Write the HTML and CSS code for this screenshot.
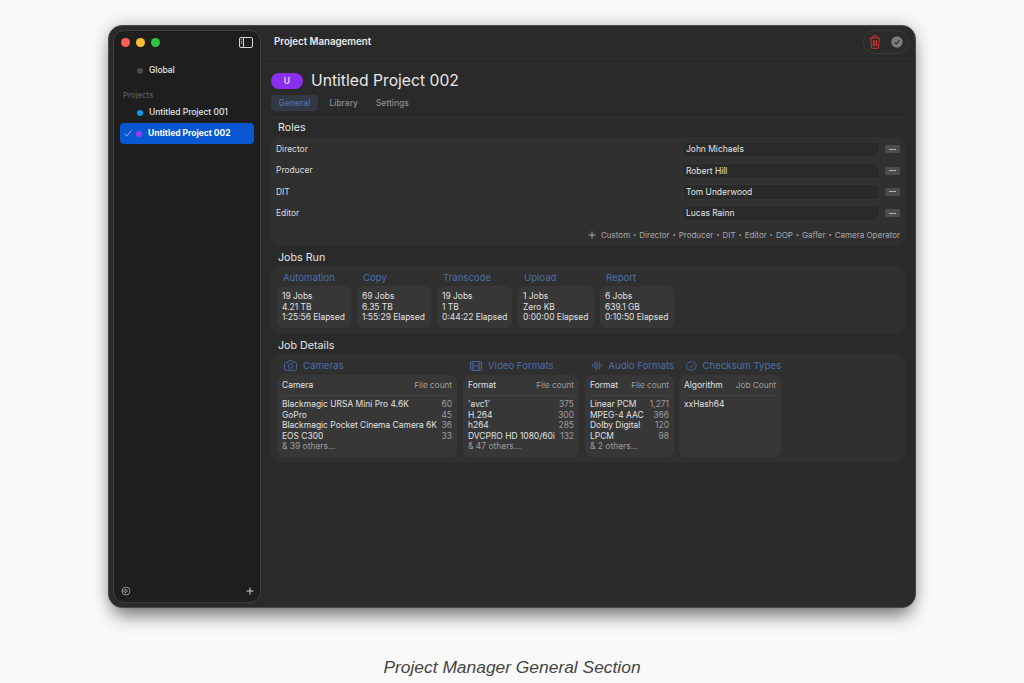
FILE: index.html
```html
<!DOCTYPE html>
<html lang="en">
<head>
<meta charset="utf-8">
<title>Project Manager General Section</title>
<link rel="stylesheet" href="styles.css">
</head>
<body>
<div class="window">
  <aside class="sidebar">
    <div class="side-top">
      <div class="lights"><i class="light red"></i><i class="light yellow"></i><i class="light green"></i></div>
      <svg class="toggle" width="14" height="11" viewBox="0 0 14 11" fill="none" stroke="#d4d4d4" stroke-width="1"><rect x=".5" y=".5" width="13" height="10" rx="1.5"/><path d="M4.5 .5v10"/><path d="M1.8 2.8h1.4M1.8 4.6h1.4M1.8 6.4h1.4" stroke-width=".8"/></svg>
    </div>
    <div class="side-item global"><i class="dot gray"></i>Global</div>
    <div class="side-label">Projects</div>
    <div class="side-item"><i class="dot blue"></i>Untitled Project 001</div>
    <div class="side-item selected">
      <svg class="tick" width="8" height="7" viewBox="0 0 8 7" fill="none" stroke="#b9cdf0" stroke-width=".8"><path d="M.7 3.8l2 2.4L7.3.6"/></svg>
      <i class="dot purple"></i>Untitled Project 002
    </div>
    <div class="side-foot">
      <svg width="10" height="10" viewBox="0 0 10 10" fill="none" stroke="#9a9a9a" stroke-width=".9"><circle cx="5" cy="5" r="4"/><path d="M1 5h2.2M4 3l2.6 2L4 7z"/></svg>
      <svg width="8" height="8" viewBox="0 0 8 8" fill="none" stroke="#d0d0d0" stroke-width="1"><path d="M4 .5v7M.5 4h7"/></svg>
    </div>
  </aside>
  <main class="main">
    <header class="topbar">
      <span class="topbar-title">Project Management</span>
      <div class="actions">
        <svg width="12" height="14" viewBox="0 0 12 14" fill="none" stroke="#c9302f" stroke-width="1.1"><path d="M.6 3h10.8M4 3V1.400c0-.4.3-.7.7-.7h2.600c.4 0 .7.300.7.700V3M1.800 3l.6 9.300c0 .6.500 1 1 1h5.200c.5 0 1-.4 1-1L10.200 3M4.400 5v6.200M6 5v6.200M7.600 5v6.200"/></svg>
        <svg width="12" height="12" viewBox="0 0 12 12"><circle cx="6" cy="6" r="5.700" fill="#7b7b7b"/><path d="M3.500 6.200l1.800 1.800 3.200-3.900" fill="none" stroke="#2a2a2a" stroke-width="1.100"/></svg>
      </div>
    </header>
    <div class="content">
      <div class="title-row"><span class="badge">U</span><h1>Untitled Project 002</h1></div>
      <nav class="tabs"><span class="tab active">General</span><span class="tab">Library</span><span class="tab">Settings</span></nav>

      <h2 class="section">Roles</h2>
      <section class="card roles">
        <div class="role"><span class="role-name">Director</span><span class="field">John Michaels</span><span class="minus"></span></div>
        <div class="role"><span class="role-name">Producer</span><span class="field">Robert Hill</span><span class="minus"></span></div>
        <div class="role"><span class="role-name">DIT</span><span class="field">Tom Underwood</span><span class="minus"></span></div>
        <div class="role"><span class="role-name">Editor</span><span class="field">Lucas Rainn</span><span class="minus"></span></div>
        <div class="presets">
          <svg width="8" height="8" viewBox="0 0 8 8" fill="none" stroke="#b5b5b5" stroke-width=".9"><path d="M4 .5v7M.5 4h7"/></svg>
          <span>Custom</span><b>•</b><span>Director</span><b>•</b><span>Producer</span><b>•</b><span>DIT</span><b>•</b><span>Editor</span><b>•</b><span>DOP</span><b>•</b><span>Gaffer</span><b>•</b><span>Camera Operator</span>
        </div>
      </section>

      <h2 class="section jobs-title">Jobs Run</h2>
      <section class="card jobs">
        <div class="job j74"><h3>Automation</h3><div class="box">19 Jobs<br>4.21 TB<br>1:25:56 Elapsed</div></div>
        <div class="job j74"><h3>Copy</h3><div class="box">69 Jobs<br>6.35 TB<br>1:55:29 Elapsed</div></div>
        <div class="job j75"><h3>Transcode</h3><div class="box">19 Jobs<br>1 TB<br>0:44:22 Elapsed</div></div>
        <div class="job j76"><h3>Upload</h3><div class="box">1 Jobs<br>Zero KB<br>0:00:00 Elapsed</div></div>
        <div class="job j74"><h3>Report</h3><div class="box">6 Jobs<br>639.1 GB<br>0:10:50 Elapsed</div></div>
      </section>

      <h2 class="section details-title">Job Details</h2>
      <section class="card details">
        <div class="detail w-cam">
          <h3><svg width="13" height="11" viewBox="0 0 13 11" fill="none" stroke="#4a6aa3" stroke-width=".9"><path d="M1.500 2.500h2.300l.9-1.800h3.600l.9 1.800h2.300c.5 0 1 .4 1 1v5.800c0 .5-.5 1-1 1h-10c-.5 0-1-.5-1-1V3.500c0-.6.5-1 1-1z"/><circle cx="6.500" cy="6" r="2.300"/></svg>Cameras</h3>
          <div class="box table">
            <div class="thead"><span>Camera</span><em>File count</em></div>
            <div class="tr"><span>Blackmagic URSA Mini Pro 4.6K</span><em>60</em></div>
            <div class="tr"><span>GoPro</span><em>45</em></div>
            <div class="tr"><span>Blackmagic Pocket Cinema Camera 6K</span><em>36</em></div>
            <div class="tr"><span>EOS C300</span><em>33</em></div>
            <div class="more">&amp; 39 others...</div>
          </div>
        </div>
        <div class="detail w-vid">
          <h3><svg width="12" height="10" viewBox="0 0 12 10" fill="none" stroke="#4a6aa3" stroke-width=".9"><rect x=".5" y=".5" width="11" height="9" rx="1"/><path d="M3 .5v9M9 .5v9M3 5h6M.5 3h2.500M.5 7h2.500M9 3h2.500M9 7h2.500"/></svg>Video Formats</h3>
          <div class="box table">
            <div class="thead"><span>Format</span><em>File count</em></div>
            <div class="tr"><span>'avc1'</span><em>375</em></div>
            <div class="tr"><span>H.264</span><em>300</em></div>
            <div class="tr"><span>h264</span><em>285</em></div>
            <div class="tr"><span>DVCPRO HD 1080/60i</span><em>132</em></div>
            <div class="more">&amp; 47 others...</div>
          </div>
        </div>
        <div class="detail w-aud">
          <h3><svg width="11" height="11" viewBox="0 0 11 11" fill="none" stroke="#4a6aa3" stroke-width=".9" stroke-linecap="round"><path d="M.6 4.500v2M2.400 3v5M4.200 .8v9.400M6 2.500v6M7.800 1.500v8M9.800 4.500v2"/></svg>Audio Formats</h3>
          <div class="box table">
            <div class="thead"><span>Format</span><em>File count</em></div>
            <div class="tr"><span>Linear PCM</span><em>1,271</em></div>
            <div class="tr"><span>MPEG-4 AAC</span><em>366</em></div>
            <div class="tr"><span>Dolby Digital</span><em>120</em></div>
            <div class="tr"><span>LPCM</span><em>98</em></div>
            <div class="more">&amp; 2 others...</div>
          </div>
        </div>
        <div class="detail w-sum">
          <h3><svg width="12" height="12" viewBox="0 0 12 12" fill="none" stroke="#4a6aa3" stroke-width=".9"><path d="M6 .7l1.500 1 1.800-.1.800 1.600 1.500 1-.4 1.800.4 1.800-1.500 1-.8 1.600-1.800-.1-1.500 1-1.500-1-1.800.1-.8-1.600-1.500-1L.9 6 .5 4.200l1.500-1 .8-1.600 1.800.1z"/><path d="M3.800 6.200l1.500 1.500 2.900-3.300"/></svg>Checksum Types</h3>
          <div class="box table">
            <div class="thead"><span>Algorithm</span><em>Job Count</em></div>
            <div class="tr"><span>xxHash64</span></div>
          </div>
        </div>
      </section>
    </div>
  </main>
</div>
<p class="caption">Project Manager General Section</p>
</body>
</html>
```
FILE: styles.css
```css
* { box-sizing: border-box; }
html, body { margin: 0; height: 100%; }
body {
  background: #f9f9f9;
  font-family: Inter, "Noto Sans", sans-serif;
  font-size: 8.45px;
  line-height: 10.5px;
  color: #e2e2e2;
  padding-top: 25px;
  overflow: hidden;
}
.window {
  width: 808px;
  height: 583px;
  margin-left: 108px;
  display: flex;
  background: #2a2a2a;
  border-radius: 14px;
  border: 1px solid #4a4a4a;
  box-shadow: 0 14px 18px -6px rgba(0,0,0,.45), 0 0 16px rgba(0,0,0,.25);
}
.sidebar {
  width: 148px;
  margin: 4px 0 4px 4px;
  background: #1e1e1f;
  border: 1px solid #3e3e3e;
  border-radius: 11px;
  display: flex;
  flex-direction: column;
  padding: 0 6px;
}
.side-top { display: flex; justify-content: space-between; align-items: center; padding: 3px 1px 0 1px; height: 17px; box-sizing: content-box; }
.lights { display: flex; gap: 6px; }
.light { width: 9px; height: 9px; border-radius: 50%; }
.red { background: #fe5f57; }
.yellow { background: #febc2e; }
.green { background: #28c840; }
.side-item { display: flex; align-items: center; height: 21px; padding-left: 17px; gap: 6px; font-weight: 500; color: #e6e6e6; position: relative; }
.global { margin-top: 9px; }
.side-label { margin-top: 7px; padding-left: 3px; height: 14px; font-size: 7.8px; font-weight: 500; color: #5d5d5d; line-height: 14px; }
.dot { width: 6px; height: 6px; border-radius: 50%; flex: none; }
.gray { background: #4a4a4a; }
.blue { background: #0d9bf5; }
.purple { background: #9a3cf5; }
.selected { background: #0a57d2; border-radius: 4px; font-weight: 700; color: #fff; padding-left: 16px; }
.tick { position: absolute; left: 4px; top: 7px; }
.side-foot { margin-top: auto; display: flex; justify-content: space-between; align-items: center; padding: 0 0 6px 1px; }
.main { flex: 1; min-width: 0; display: flex; flex-direction: column; }
.topbar { height: 33px; flex: none; display: flex; align-items: center; justify-content: space-between; padding: 0 6px 0 13px; border-bottom: 1px solid #313131; }
.topbar-title { font-weight: 600; font-size: 9.7px; color: #ececec; padding-top: 1px; }
.actions { width: 46px; height: 24px; border: 1px solid #3a3a3a; border-radius: 12px; display: flex; align-items: center; justify-content: space-between; padding: 0 5px; }
.content { padding: 0 10px; display: flex; flex-direction: column; }
.title-row { display: flex; align-items: center; gap: 8px; margin-top: 11px; height: 22px; }
.badge { width: 32px; height: 16px; border-radius: 8px; background: #8a2ff0; color: #e8dcff; font-size: 8.6px; font-weight: 600; display: flex; align-items: center; justify-content: center; }
h1 { margin: 0; font-size: 15.7px; font-weight: 400; color: #e8e8e8; line-height: 22px; }
.tabs { display: flex; gap: 0; margin-top: 3px; height: 23px; border-bottom: 1px solid #323232; padding-bottom: 6px; }
.tab { display: flex; align-items: center; padding: 0 6.5px; height: 16px; color: #8d8d8d; font-weight: 500; margin-right: 5px; }
.tab.active { background: #323844; color: #4f6ea5; border-radius: 4px; font-weight: 600; width: 47px; justify-content: center; padding: 0; }
.section { margin: 0; padding-left: 7px; font-size: 10.7px; font-weight: 400; color: #e6e6e6; line-height: 19px; height: 19px; }
.card { background: #303030; border-radius: 8px; }
.roles { padding: 1.500px 5px 5px 5px; height: 108px; }
.role { display: flex; align-items: center; height: 21.4px; }
.role-name { flex: 1; color: #dcdcdc; }
.field { width: 198px; height: 16px; background: #2a2a2a; border: 1px solid #353535; border-radius: 5px; padding-left: 3px; line-height: 14px; color: #e2e2e2; }
.minus { width: 15px; height: 8px; margin-left: 5px; background: #4d4d4d; border-radius: 2px; display: flex; align-items: center; justify-content: center; }
.minus::before { content: ""; width: 7px; height: 1px; background: #b0b0b0; }
.presets { display: flex; justify-content: flex-end; align-items: center; gap: 2.9px; margin-top: 5.700px; font-size: 8px; color: #a8a8a8; line-height: 10px; }
.presets svg { margin-right: 2px; }
.presets b { font-weight: 400; font-size: 6px; }
.jobs-title { margin-top: 3px; height: 18px; }
.jobs { display: flex; gap: 6px; height: 67px; padding: 5px 6px; }
.job { flex: none; }
.j74 { width: 74px; }
.j75 { width: 75px; }
.j76 { width: 76px; }
h3 { margin: 0; font-size: 9.6px; font-weight: 400; color: #4c6ea8; line-height: 14px; height: 15px; padding: 0 0 2px 6px; display: flex; align-items: center; gap: 6px; white-space: nowrap; }
.box { background: #373737; border-radius: 7px; padding: 5px; line-height: 10.500px; color: #e0e0e0; white-space: nowrap; }
.jobs .box { height: 42px; }
.details-title { margin-top: 3px; height: 18px; }
.details { display: flex; gap: 6px; height: 108px; padding: 5px 6px; }
.details h3 { padding-left: 7px; margin-bottom: 1px; }
.detail { flex: none; }
.w-cam { width: 180px; }
.w-vid { width: 116px; }
.w-aud { width: 89px; }
.w-sum { width: 102px; margin-left: -1px; }
.table { height: 82px; }
.thead { display: flex; justify-content: space-between; height: 16px; border-bottom: 1px solid #424242; margin-bottom: 3px; }
.tr { display: flex; justify-content: space-between; gap: 4px; white-space: nowrap; }
em { font-style: normal; color: #9c9c9c; }
.thead em { font-size: 8.2px; }
.more { color: #9a9a9a; }
.caption { margin: 49px 0 0; text-align: center; font-family: "Liberation Sans", Arial, sans-serif; font-style: italic; font-size: 17.4px; line-height: 20px; color: #444; }
```
